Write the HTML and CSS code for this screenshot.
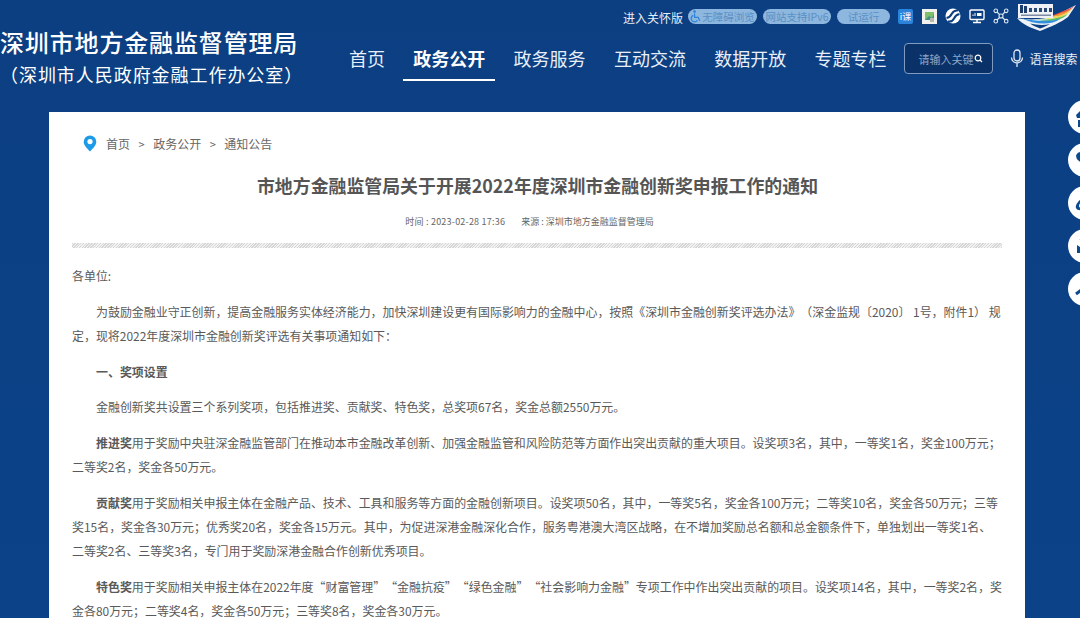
FILE: index.html
```html
<!DOCTYPE html>
<html lang="zh-CN">
<head>
    <meta charset="UTF-8">
    <meta name="viewport" content="width=device-width, initial-scale=1.0">
    <title>市地方金融监管局关于开展2022年度深圳市金融创新奖申报工作的通知</title>
    <link rel="stylesheet" href="styles.css">
</head>
<body>
    <header class="site-header">
        <div class="site-title">
            <h1>深圳市地方金融监督管理局</h1>
            <p>（深圳市人民政府金融工作办公室）</p>
        </div>
        <div class="header-right">
            <div class="top-bar">
                <a class="care-link" href="#">进入关怀版</a>
                <span class="pill pill-access">
                    <svg width="12" height="13" viewBox="0 0 12 13"><circle cx="4.6" cy="1.6" r="1.4" fill="#2f86d8"/><path d="M4.6 3.4v4h3.6l1.6 3.4M3.2 5.4a3.4 3.4 0 1 0 4.2 5" fill="none" stroke="#2f86d8" stroke-width="1.3"/></svg>
                    无障碍浏览
                </span>
                <span class="pill pill-ipv6">网站支持IPv6</span>
                <span class="pill pill-trial">试运行</span>
                <span class="tool-icon icon-ke">i课</span>
                <span class="tool-icon icon-pic">
                    <svg width="15" height="15" viewBox="0 0 15 15"><rect width="15" height="15" fill="#f1f1ee"/><rect x="3" y="3" width="9" height="8" fill="#7fbf6a"/><path d="M3 11l4-4 3 2 2-4v6z" fill="#3f8f8a"/><rect x="8" y="9" width="4" height="4" fill="#b9b9b0"/></svg>
                </span>
                <span class="tool-icon">
                    <svg width="16" height="16" viewBox="0 0 16 16"><circle cx="8" cy="8" r="7.5" fill="#fff"/><path d="M1.5 10c3-.5 4.500-2.500 5.500-4.500S10 2 13 2.500M14.500 6c-3 .5-4.500 2.500-5.500 4.500S6 14 3 13.500" fill="none" stroke="#0c4081" stroke-width="2"/></svg>
                </span>
                <span class="tool-icon">
                    <svg width="16" height="16" viewBox="0 0 16 16" fill="none" stroke="#fff"><rect x="1" y="2" width="14" height="9.500" rx="1" stroke-width="1.400"/><path d="M8 11.500v2.500M4 14.500h8" stroke-width="1.400"/><path d="M4 8V6.500M6 8V5" stroke-width="1"/><path d="M8 5h4.500v3H8z" fill="#fff" stroke="none"/></svg>
                </span>
                <span class="tool-icon">
                    <svg width="16" height="16" viewBox="0 0 16 16" fill="none" stroke="#dfe8f4" stroke-width="1.100"><path d="M8 8L3 3M8 8l5-5M8 8l-5 5M8 8l5 5"/><circle cx="8" cy="8" r="2" fill="#0c4081"/><circle cx="2.800" cy="2.800" r="1.800" fill="#0c4081"/><circle cx="13.200" cy="2.800" r="1.800" fill="#0c4081"/><circle cx="2.800" cy="13.200" r="1.800" fill="#0c4081"/><circle cx="13.200" cy="13.200" r="1.800" fill="#0c4081"/></svg>
                </span>
                <svg class="event-logo" width="60" height="28" viewBox="0 0 60 28">
                    <path d="M1 15C16 18 30 16 40 12L60 2 52 14C46 19 34 24 24 28 15 25 6 21 1 15z" fill="#eef2f7"/>
                    <path d="M35 13C43 10 52 6 59 3 55 6 50 9 45 12z" fill="#e2483d"/>
                    <path d="M31 14.500C37 13 41 11.500 45 10 49 9 52 7.500 57 5 53 9 49 11 44 13z" fill="#ef9a35"/>
                    <path d="M28 15.500C34 15 39 14 44 12.500 48 11.500 51 10 55 8 52 11 48 13 44 14.500 39 15.500 33 16 28 15.500z" fill="#f0d84a"/>
                    <path d="M20 16.500C30 17 38 16 45 14L52 11C49 14 46 15.500 42 17 35 18.500 28 18 20 16.500z" fill="#5dbb62"/>
                    <path d="M6 15.500C18 18 34 19 44 16 40 19 34 20.500 28 20.500 20 20.500 12 18.500 6 15.500z" fill="#2f8fdc"/>
                    <path d="M14 20.500C20 22 28 22.500 34 21 30 23 27 24.500 24 25.500 20 24 17 22.500 14 20.500z" fill="#0c4081"/>
                    <rect x="2" y="1" width="35" height="14" fill="#eef2f7"/>
                    <path d="M4 2h3v8H4zM8 3h3v7H8z" fill="#1c3d6e"/>
                    <path d="M13 5h3v4h-3zM18 5h3v4h-3zM23 5h3v4h-3zM28 5h3v4h-3zM33 5h3v4h-3z" fill="#2b4a78"/>
                    <path d="M5 11.500h30v1.500H5z" fill="#7c8ba3"/>
                </svg>
            </div>
            <div class="nav-bar">
                <nav class="main-nav">
                    <a href="#">首页</a>
                    <a class="active" href="#">政务公开</a>
                    <a href="#">政务服务</a>
                    <a href="#">互动交流</a>
                    <a href="#">数据开放</a>
                    <a href="#">专题专栏</a>
                </nav>
                <form class="search-box">
                    <input class="search-input" type="text" placeholder="请输入关键词">
                    <svg width="9" height="9" viewBox="0 0 9 9" fill="none" stroke="#fff" stroke-width="1.200"><circle cx="4" cy="4" r="2.800"/><path d="M6 6l2 2"/></svg>
                </form>
                <a class="voice" href="#">
                    <svg width="14" height="20" viewBox="0 0 14 20" fill="none" stroke="#dfe8f4" stroke-width="1.300"><rect x="4" y="1" width="6" height="11" rx="3"/><path d="M1.500 8.500a5.500 5.500 0 0 0 11 0M7 14v4"/></svg>
                    语音搜索
                </a>
            </div>
        </div>
    </header>

    <aside class="side-tools">
        <span class="side-btn"><svg width="34" height="34" viewBox="0 0 34 34" fill="#0c4a90"><path d="M8 15l6-6v9H9zM10 20h6v7h-6z"/></svg></span>
        <span class="side-btn"><svg width="34" height="34" viewBox="0 0 34 34" fill="#0c4a90"><path d="M8 13a5 5 0 0 1 8-3v12l-5-4a6 6 0 0 1-3-5z"/></svg></span>
        <span class="side-btn"><svg width="34" height="34" viewBox="0 0 34 34" fill="#0c4a90"><path d="M14 12c-5 4-7 8-6 10 1 3 5 2 8 2v-3c-3 1-5 1-5-1 0-2 2-4 3-6z"/></svg></span>
        <span class="side-btn"><svg width="34" height="34" viewBox="0 0 34 34" fill="#0c4a90"><path d="M9 16l3 2h4v6H9zM11 10l5 3v2z"/></svg></span>
        <span class="side-btn"><svg width="34" height="34" viewBox="0 0 34 34" fill="none" stroke="#0c4a90" stroke-width="3"><path d="M8 22l8-6"/></svg></span>
    </aside>

    <main class="article-card">
        <div class="breadcrumb">
            <svg width="14" height="17" viewBox="0 0 14 17"><path d="M7 0.500a6.300 6.300 0 0 1 6.300 6.300c0 3.800-3.800 7-6.300 9.700C4.500 13.800.7 10.600.7 6.800A6.300 6.300 0 0 1 7 .5z" fill="#1e9be8"/><circle cx="7" cy="6.600" r="2.600" fill="#fff"/></svg>
            <a href="#">首页</a><span>&gt;</span><a href="#">政务公开</a><span>&gt;</span><a href="#">通知公告</a>
        </div>
        <h2 class="article-title">市地方金融监管局关于开展2022年度深圳市金融创新奖申报工作的通知</h2>
        <div class="article-meta">
            <span class="meta-date">时间 : 2023-02-28 17:36</span>
            <span>来源 : 深圳市地方金融监督管理局</span>
        </div>
        <div class="hatch-line"></div>
        <div class="article-body">
            <p class="no-indent">各单位:</p>
            <p>为鼓励金融业守正创新，提高金融服务实体经济能力，加快深圳建设更有国际影响力的金融中心，按照《深圳市金融创新奖评选办法》（深金监规〔2020〕 1号，附件1） 规<br>定，现将2022年度深圳市金融创新奖评选有关事项通知如下：</p>
            <p><strong>一、奖项设置</strong></p>
            <p>金融创新奖共设置三个系列奖项，包括推进奖、贡献奖、特色奖，总奖项67名，奖金总额2550万元。</p>
            <p><strong>推进奖</strong>用于奖励中央驻深金融监管部门在推动本市金融改革创新、加强金融监管和风险防范等方面作出突出贡献的重大项目。设奖项3名，其中，一等奖1名，奖金100万元；二等奖2名，奖金各50万元。</p>
            <p><strong>贡献奖</strong>用于奖励相关申报主体在金融产品、技术、工具和服务等方面的金融创新项目。设奖项50名，其中，一等奖5名，奖金各100万元；二等奖10名，奖金各50万元；三等奖15名，奖金各30万元；优秀奖20名，奖金各15万元。其中，为促进深港金融深化合作，服务粤港澳大湾区战略，在不增加奖励总名额和总金额条件下，单独划出一等奖1名、二等奖2名、三等奖3名，专门用于奖励深港金融合作创新优秀项目。</p>
            <p><strong>特色奖</strong>用于奖励相关申报主体在2022年度“财富管理”“金融抗疫”“绿色金融”“社会影响力金融”专项工作中作出突出贡献的项目。设奖项14名，其中，一等奖2名，奖金各80万元；二等奖4名，奖金各50万元；三等奖8名，奖金各30万元。</p>
        </div>
    </main>
</body>
</html>
```

FILE: styles.css
```css
html, body {
    height: 100%;
    overflow: hidden;
}

body {
    margin: 0;
    background: linear-gradient(180deg, #0c3f82 0%, #0b4288 100%);
    font-family: "Noto Sans CJK SC", "Liberation Sans", sans-serif;
    color: #555;
    text-spacing-trim: space-all;
}

a {
    color: inherit;
    text-decoration: none;
}

.site-header {
    display: flex;
    height: 112px;
    color: #fff;
}

.site-title {
    width: 349px;
    padding-top: 27px;
    box-sizing: border-box;
    white-space: nowrap;
}

.site-title h1 {
    margin: 0;
    font-size: 24px;
    line-height: 30px;
    font-weight: 500;
    letter-spacing: 0.85px;
}

.site-title p {
    margin: 4px 0 0;
    font-size: 18px;
    line-height: 26px;
    letter-spacing: 0.95px;
}

.header-right {
    flex: 1;
    min-width: 0;
}

.top-bar {
    display: flex;
    align-items: center;
    height: 34px;
    padding-left: 274px;
    white-space: nowrap;
}

.care-link {
    font-size: 12px;
    margin-right: 5px;
    color: #e8eef7;
}

.pill {
    display: flex;
    align-items: center;
    justify-content: center;
    height: 15px;
    border-radius: 8px;
    background: #8db7de;
    color: #5b8fc4;
    font-size: 10.500px;
    margin-right: 6px;
    margin-top: -2px;
}

.pill-access { width: 69px; }
.pill-ipv6 { width: 68px; }
.pill-trial { width: 53px; margin-right: 8px; }

.tool-icon {
    display: flex;
    align-items: center;
    justify-content: center;
    width: 16px;
    height: 16px;
    margin-right: 8px;
    margin-top: -2px;
}

.icon-ke {
    width: 15px;
    height: 15px;
    border-radius: 2px;
    background: #2b84dc;
    font-size: 9px;
    color: #fff;
}

.event-logo {
    margin-left: -1px;
    margin-top: -1px;
}

.nav-bar {
    display: flex;
    align-items: flex-start;
    padding-top: 9px;
}

.main-nav {
    display: flex;
    gap: 8.300px;
}

.main-nav a {
    padding: 0 10px;
    height: 38px;
    line-height: 31px;
    font-size: 18px;
    color: #e9eff8;
    box-sizing: border-box;
}

.main-nav a:first-child {
    padding: 0;
    margin-right: 10px;
}

.main-nav a.active {
    font-weight: 700;
    color: #fff;
    border-bottom: 2px solid #fff;
}

.search-box {
    display: flex;
    align-items: center;
    width: 89px;
    height: 31px;
    margin: 0 0 0 8px;
    padding: 0 9px 0 13px;
    box-sizing: border-box;
    border: 1px solid #7f9cc0;
    border-radius: 4px;
    background: #0a3269;
}

.search-input {
    flex: 1;
    width: 56px;
    min-width: 0;
    padding: 0;
    border: none;
    outline: none;
    background: none;
    font-family: inherit;
    font-size: 11px;
    color: #fff;
}

.search-input::placeholder {
    color: #8da6c6;
}

.voice {
    display: flex;
    align-items: center;
    gap: 5px;
    height: 31px;
    margin-left: 17px;
    white-space: nowrap;
    font-size: 12px;
    color: #e9eff8;
}

.side-tools {
    position: absolute;
    top: 100px;
    left: 1068px;
    display: flex;
    flex-direction: column;
    gap: 9px;
}

.side-btn {
    display: block;
    width: 34px;
    height: 34px;
    border-radius: 50%;
    background: #fff;
}

.article-card {
    width: 976px;
    height: 506px;
    margin-left: 49px;
    padding: 0 22px 0 23px;
    box-sizing: border-box;
    background: #fff;
    overflow: hidden;
}

.breadcrumb {
    display: flex;
    align-items: center;
    height: 17px;
    padding: 23px 0 0 11px;
    font-size: 12px;
    color: #666;
}

.breadcrumb svg {
    margin-right: 9px;
}

.breadcrumb span {
    margin: 0 8.500px;
    font-size: 11px;
}

.article-title {
    margin: 20px 0 0;
    text-align: center;
    font-size: 17.900px;
    line-height: 26px;
    font-weight: 700;
    color: #555;
}

.article-meta {
    display: flex;
    justify-content: center;
    gap: 16px;
    margin-top: 17px;
    padding-right: 16px;
    font-size: 9px;
    line-height: 14px;
    color: #666;
}

.meta-date {
    letter-spacing: 0.220px;
}

.hatch-line {
    height: 5px;
    margin: 14px 1px 0 0;
    background: repeating-linear-gradient(135deg, #d6d6d6 0, #d6d6d6 1px, #f2f2f2 1px, #f2f2f2 2px);
}

.article-body {
    margin-top: 16px;
    font-size: 11.950px;
    line-height: 24px;
    color: #595959;
}

.article-body p {
    margin: 0 0 11.800px;
    text-indent: 24px;
}

.article-body p.no-indent {
    text-indent: 0;
}

.article-body strong {
    font-weight: 700;
}
```
